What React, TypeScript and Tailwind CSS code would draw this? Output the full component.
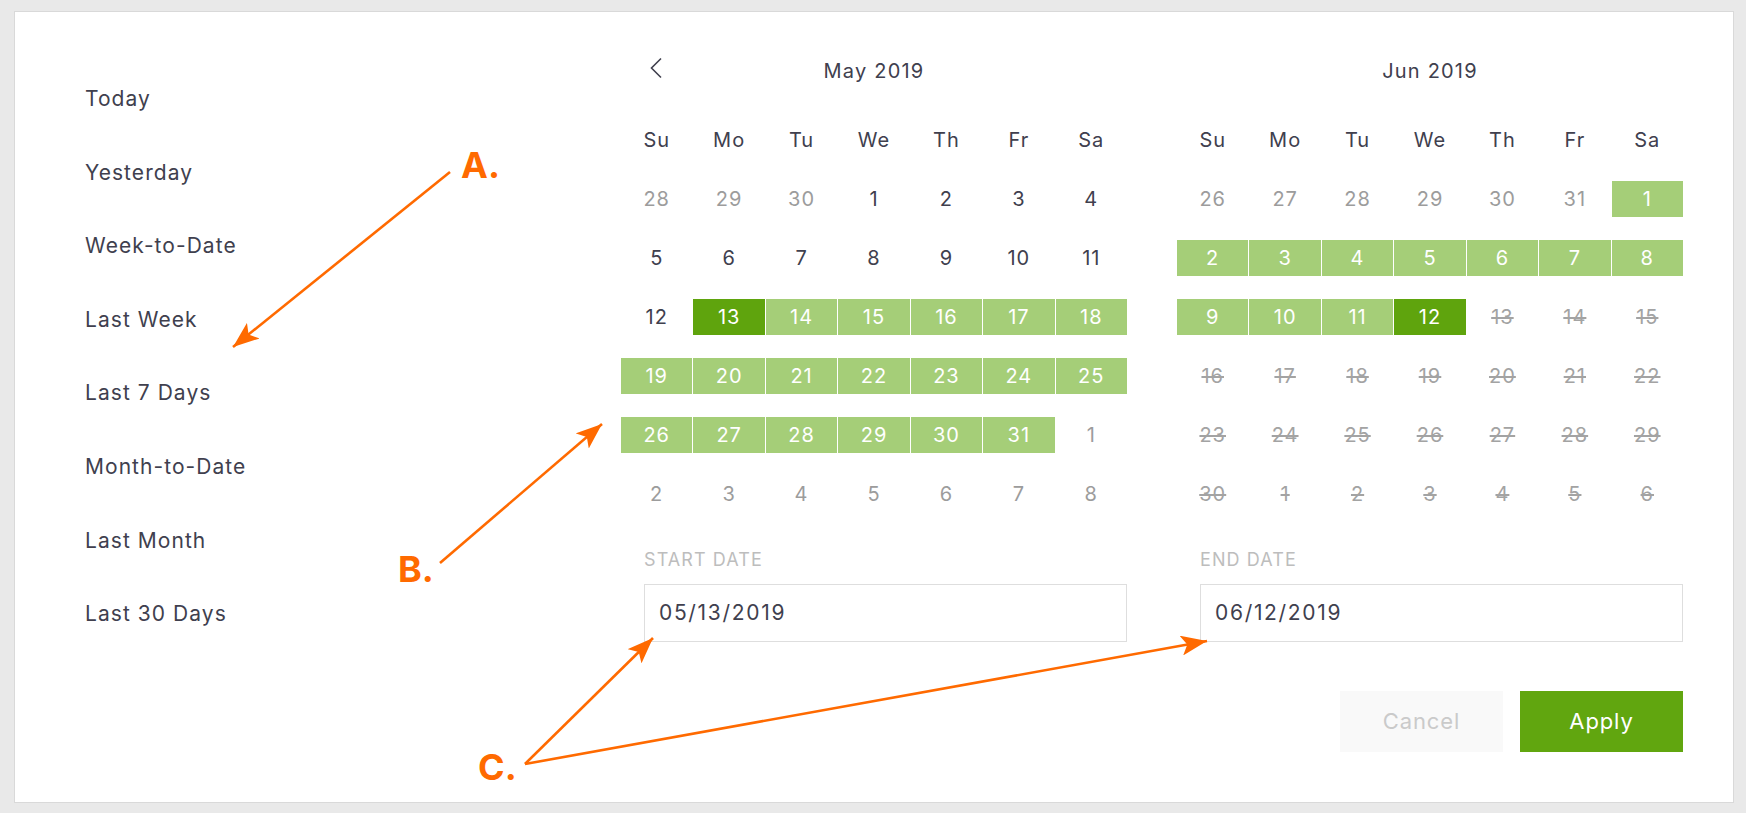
import * as React from 'react';

type Kind = 'day' | 'muted' | 'range' | 'edge' | 'off';

const PRESETS = [
  'Today',
  'Yesterday',
  'Week-to-Date',
  'Last Week',
  'Last 7 Days',
  'Month-to-Date',
  'Last Month',
  'Last 30 Days',
];

const WEEKDAYS = ['Su', 'Mo', 'Tu', 'We', 'Th', 'Fr', 'Sa'];

const MAY: [number, Kind][][] = [
  [[28, 'muted'], [29, 'muted'], [30, 'muted'], [1, 'day'], [2, 'day'], [3, 'day'], [4, 'day']],
  [[5, 'day'], [6, 'day'], [7, 'day'], [8, 'day'], [9, 'day'], [10, 'day'], [11, 'day']],
  [[12, 'day'], [13, 'edge'], [14, 'range'], [15, 'range'], [16, 'range'], [17, 'range'], [18, 'range']],
  [[19, 'range'], [20, 'range'], [21, 'range'], [22, 'range'], [23, 'range'], [24, 'range'], [25, 'range']],
  [[26, 'range'], [27, 'range'], [28, 'range'], [29, 'range'], [30, 'range'], [31, 'range'], [1, 'muted']],
  [[2, 'muted'], [3, 'muted'], [4, 'muted'], [5, 'muted'], [6, 'muted'], [7, 'muted'], [8, 'muted']],
];

const JUN: [number, Kind][][] = [
  [[26, 'muted'], [27, 'muted'], [28, 'muted'], [29, 'muted'], [30, 'muted'], [31, 'muted'], [1, 'range']],
  [[2, 'range'], [3, 'range'], [4, 'range'], [5, 'range'], [6, 'range'], [7, 'range'], [8, 'range']],
  [[9, 'range'], [10, 'range'], [11, 'range'], [12, 'edge'], [13, 'off'], [14, 'off'], [15, 'off']],
  [[16, 'off'], [17, 'off'], [18, 'off'], [19, 'off'], [20, 'off'], [21, 'off'], [22, 'off']],
  [[23, 'off'], [24, 'off'], [25, 'off'], [26, 'off'], [27, 'off'], [28, 'off'], [29, 'off']],
  [[30, 'off'], [1, 'off'], [2, 'off'], [3, 'off'], [4, 'off'], [5, 'off'], [6, 'off']],
];

const cellClass: Record<Kind, string> = {
  day: 'text-[#40404e]',
  muted: 'text-[#9c9c9c]',
  range: 'bg-[#a5ce78] text-white',
  edge: 'bg-[#5fa40d] text-white',
  off: 'text-[#a3a3a3] line-through',
};

function Month({
  title,
  weeks,
  label,
  value,
  showPrev,
}: {
  title: string;
  weeks: [number, Kind][][];
  label: string;
  value: string;
  showPrev?: boolean;
}) {
  return (
    <div className="flex w-[506px] flex-col pt-[41px]">
      {/* header: prev arrow on the left, month centered */}
      <div className="grid h-9 grid-cols-[1fr_auto_1fr] items-center">
        <div className="pl-[28px]">
          {showPrev && (
            <svg width="14" height="22" viewBox="0 0 14 22" className="-mt-[6px]">
              <path d="M12 1.5 L2.5 11 L12 20.5" fill="none" stroke="#40404e" strokeWidth="1.6" />
            </svg>
          )}
        </div>
        <div className="text-[20px] tracking-[0.06em] text-[#40404e]">{title}</div>
        <div />
      </div>

      <div className="mt-[33px] grid grid-cols-7 gap-x-px gap-y-[23px] text-[20px] tracking-[0.05em]">
        {WEEKDAYS.map((d) => (
          <div key={d} className="flex h-9 items-center justify-center text-[#40404e]">
            {d}
          </div>
        ))}
        {weeks.flat().map(([n, kind], i) => (
          <div key={i} className={`flex h-9 items-center justify-center ${cellClass[kind]}`}>
            {n}
          </div>
        ))}
      </div>

      <div className="ml-[23px] mt-[38px] flex flex-col">
        <div className="h-5 text-[18px] leading-5 tracking-[0.06em] uppercase text-[#bdbdbd]">{label}</div>
        <div className="mt-[14px] flex h-[58px] items-center border border-[#dedede] px-[14px] text-[21px] tracking-[0.08em] text-[#40404e]">
          {value}
        </div>
      </div>
    </div>
  );
}

export default function App() {
  return (
    <div
      className="relative h-[813px] w-[1746px] overflow-hidden bg-[#e9e9e9] pl-[14px] pt-[11px]"
      style={{ fontFamily: 'Inter, "Noto Sans", sans-serif' }}
    >
      <div className="flex h-[792px] w-[1720px] border border-[#d9d9d9] bg-white">
        {/* preset ranges */}
        <div className="flex w-[606px] shrink-0 flex-col pl-[70px] pt-[50px]">
          {PRESETS.map((p) => (
            <div key={p} className="flex h-[73.6px] items-center text-[21px] tracking-[0.05em] text-[#40404e]">
              {p}
            </div>
          ))}
        </div>

        {/* calendars */}
        <div className="flex flex-col">
          <div className="flex gap-[50px]">
            <Month title="May 2019" weeks={MAY} label="Start Date" value="05/13/2019" showPrev />
            <Month title="Jun 2019" weeks={JUN} label="End Date" value="06/12/2019" />
          </div>
          <div className="mt-[49px] flex justify-end gap-[17px] text-[22px] tracking-[0.04em]">
            <button className="h-[61px] w-[163px] bg-[#f9f9f9] text-[#cacaca]">Cancel</button>
            <button className="h-[61px] w-[163px] bg-[#61a60f] text-white">Apply</button>
          </div>
        </div>
      </div>

      {/* callout annotations */}
      <svg
        className="pointer-events-none absolute left-0 top-0"
        width="1746"
        height="813"
        viewBox="0 0 1746 813"
      >
        <defs>
          <marker
            id="head"
            markerUnits="userSpaceOnUse"
            markerWidth="26"
            markerHeight="20"
            refX="26"
            refY="10"
            orient="auto"
          >
            <path d="M0 0 L26 10 L0 20 L6 10 Z" fill="#ff6a00" />
          </marker>
        </defs>
        <g stroke="#ff6a00" strokeWidth="2.6" fill="none">
          <line x1="450" y1="172" x2="233" y2="347" markerEnd="url(#head)" />
          <line x1="440" y1="563" x2="602" y2="424" markerEnd="url(#head)" />
          <line x1="525" y1="764" x2="653" y2="638" markerEnd="url(#head)" />
          <line x1="525" y1="764" x2="1207" y2="641" markerEnd="url(#head)" />
        </g>
        <g fill="#ff6a00" fontSize="36" fontWeight="700" fontFamily="Inter, sans-serif">
          <text x="461" y="178">A.</text>
          <text x="398" y="582">B.</text>
          <text x="478" y="780">C.</text>
        </g>
      </svg>
    </div>
  );
}
